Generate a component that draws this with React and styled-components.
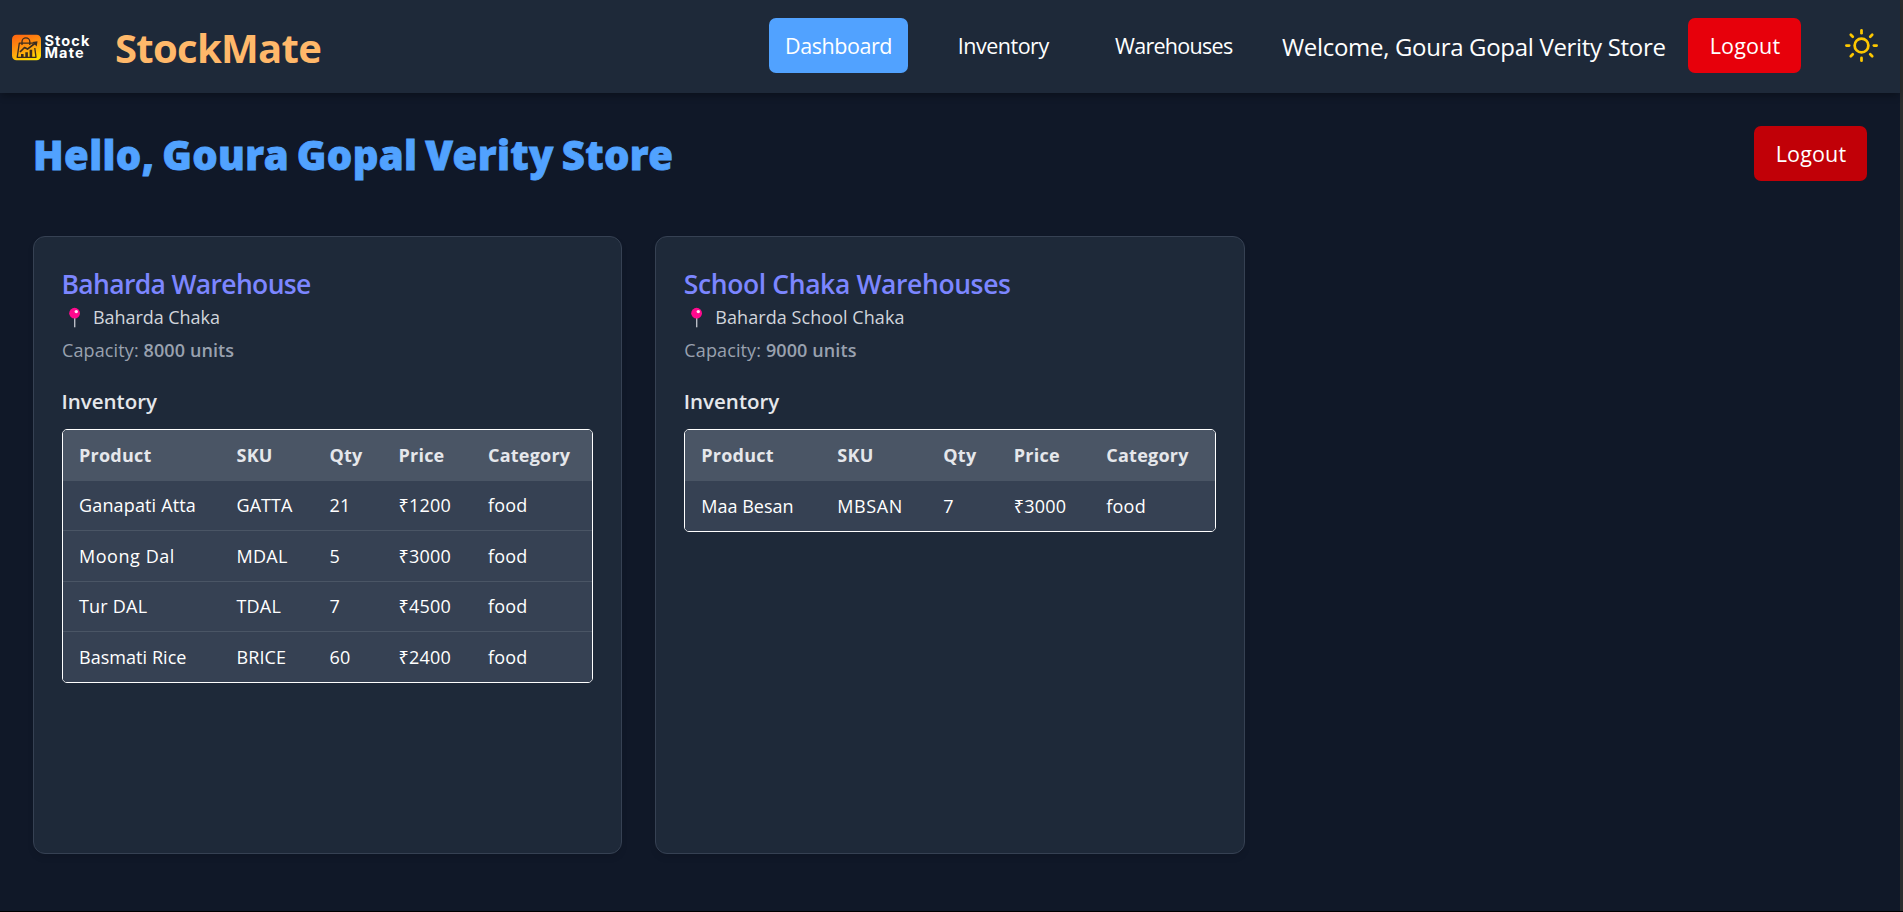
import React from 'react';
import styled, { createGlobalStyle } from 'styled-components';
import { FiSun } from 'react-icons/fi';

const Global = createGlobalStyle`
  *, *::before, *::after { box-sizing: border-box; }
  body { margin: 0; background: #000; overflow: hidden; }
  h1, h2, h3, p { margin: 0; }
`;

const Screen = styled.div`
  height: 912px;
  border-bottom: 1px solid #000;
  background: #2c2c2c;
  padding-right: 3px;
  font-family: 'Open Sans', 'Noto Sans', sans-serif;
  color: #fff;
`;

const Page = styled.div`
  height: 100%;
  background: #101828;
`;

const Header = styled.header`
  display: flex;
  align-items: center;
  justify-content: space-between;
  height: 93px;
  padding: 18px 22px 20px 11px;
  background: #1e2939;
  box-shadow: 0 4px 7px -1px rgba(0, 0, 0, 0.3);
`;

const Brand = styled.div`
  display: flex;
  align-items: center;
`;

const BrandName = styled.span`
  margin-left: 20px;
  padding-top: 4px;
  font-size: 40px;
  line-height: 46px;
  font-weight: 700;
  letter-spacing: -0.7px;
  color: #ffb86a;
`;

const Logo = styled.div`
  display: flex;
  align-items: center;
  width: 84px;
  height: 36px;
`;

const LogoIcon = styled.svg`
  flex: none;
  width: 33.5px;
  height: 36px;
`;

const LogoText = styled.div`
  padding-top: 3px;
  font-family: Inter, sans-serif;
  font-size: 14.5px;
  line-height: 12.4px;
  font-weight: 700;
  letter-spacing: 1.1px;
  white-space: pre-line;
`;

const Nav = styled.nav`
  display: flex;
  align-items: center;
  gap: 33px;
`;

const NavLink = styled.a`
  width: ${(p) => p.$width}px;
  height: 55px;
  line-height: 55px;
  border-radius: 7px;
  text-align: center;
  white-space: nowrap;
  font-size: 21.5px;
  letter-spacing: ${(p) => p.$track}px;
  background: ${(p) => (p.$active ? '#51a2ff' : 'transparent')};
`;

const Account = styled.div`
  display: flex;
  align-items: center;
`;

const Welcome = styled.span`
  width: 384px;
  margin-right: 22px;
  padding-top: 2px;
  font-size: 24px;
  line-height: 36px;
  letter-spacing: -0.31px;
  white-space: nowrap;
`;

const LogoutButton = styled.button`
  width: 113px;
  height: 55px;
  padding: 0 0 0 1px;
  border: 0;
  border-radius: 7px;
  font-family: inherit;
  font-size: 21.5px;
  line-height: 55px;
  letter-spacing: 0.15px;
  color: #fff;
  background: ${(p) => (p.$dark ? '#c10007' : '#e7000b')};
`;

const ThemeIcon = styled(FiSun)`
  display: block;
  width: 33px;
  height: 33px;
  margin-left: 44px;
  color: #fdc700;
`;

const Main = styled.main`
  padding: 33px;
`;

const TitleRow = styled.div`
  display: flex;
  align-items: center;
  justify-content: space-between;
  height: 55px;
  margin-bottom: 55px;
`;

const Greeting = styled.h1`
  padding-top: 3px;
  font-family: 'Noto Sans', sans-serif;
  font-size: 40px;
  line-height: 46px;
  font-weight: 900;
  letter-spacing: 0.4px;
  word-spacing: -3px;
  -webkit-text-stroke: 0.8px #51a2ff;
  color: #51a2ff;
`;

const Cards = styled.section`
  display: grid;
  grid-template-columns: repeat(3, 1fr);
  gap: 33px;
`;

const Card = styled.article`
  height: 617.5px;
  padding: 28px;
  border: 1px solid #364153;
  border-radius: 12px;
  background: #1e2939;
  box-shadow: 0 4px 7px -1px rgba(0, 0, 0, 0.1);
`;

const CardTitle = styled.h2`
  margin-left: -0.5px;
  padding-top: 1px;
  font-size: 26.5px;
  line-height: 36px;
  font-weight: 600;
  letter-spacing: ${(p) => p.$track}px;
  color: #7c86ff;
  white-space: nowrap;
`;

const Location = styled.p`
  display: flex;
  font-size: 18px;
  line-height: 31px;
  height: 31px;
  letter-spacing: ${(p) => p.$track}px;
  color: #d1d5dc;
`;

const PinIcon = styled.svg`
  width: 31px;
  height: 32px;
  margin: -1px 0 0;
  flex: none;
`;

const Capacity = styled.p`
  font-size: 18px;
  line-height: 34px;
  letter-spacing: 0.12px;
  color: #99a1af;

  strong {
    font-weight: 600;
    letter-spacing: 0.1px;
  }
`;

const SectionTitle = styled.h3`
  margin: 18px 0 11px -0.5px;
  font-size: 20.5px;
  line-height: 33px;
  font-weight: 600;
  letter-spacing: 0;
  color: #e5e7eb;
`;

const TableFrame = styled.div`
  border: 1px solid #fff;
  border-radius: 5px;
  overflow: hidden;
`;

const Table = styled.table`
  width: 100%;
  table-layout: fixed;
  border-collapse: separate;
  border-spacing: 0;
  font-size: 18px;
  text-align: left;
`;

const HeadCell = styled.th`
  width: ${(p) => (p.$width ? `${p.$width}px` : 'auto')};
  height: 51px;
  padding: 0 0 2px 16px;
  font-weight: 700;
  letter-spacing: 0.22px;
  color: #e5e7eb;
  background: #4a5565;
`;

const Row = styled.tr`
  height: 50px;
  background: #364153;

  &:nth-child(2) { height: 51px; }
  &:not(:last-child) td { border-bottom: 1px solid #4a5565; }
`;

const Cell = styled.td`
  padding: 0 0 1px 16px;
  line-height: 26px;
  white-space: nowrap;
  letter-spacing: ${(p) => p.$track ?? 0.15}px;
`;

const LogoMark = () => (
  <Logo>
    <LogoIcon viewBox="0 0 33.5 36" aria-hidden="true">
      <defs>
        <linearGradient id="bag" x1="0.3" y1="0" x2="0.7" y2="1">
          <stop offset="0" stopColor="#ff6a10" />
          <stop offset="0.5" stopColor="#ff9a10" />
          <stop offset="1" stopColor="#ffe000" />
        </linearGradient>
      </defs>
      <rect x="1" y="6.8" width="29" height="25.5" rx="4.5" fill="url(#bag)" />
      <g fill="none" stroke="#3a2c20" strokeWidth="1.3" strokeLinejoin="round">
        <path d="M22 15.2H8.3L6.2 29.3H25L23.8 20" />
        <path d="M11 17V13.8a3.9 3.9 0 0 1 7.8 0V17" />
        <path d="M9 24l4.5-4.5 3 1.6 7.2-5.6" strokeWidth="1.7" />
      </g>
      <path d="M21.3 14l5.2-.7-.8 5.2z" fill="#3a2c20" />
      <path d="M10 26h2.6v3.3H10zM14.3 24.2h2.6v5.1h-2.6zM18.6 21.8h2.6v7.5h-2.6z" fill="#3a2c20" />
    </LogoIcon>
    <LogoText>{'Stock\nMate'}</LogoText>
  </Logo>
);

const Pin = () => (
  <PinIcon viewBox="0 0 31 32" aria-hidden="true">
    <rect x="12" y="16" width="1.4" height="10.3" fill="#b9bdc6" />
    <circle cx="12.6" cy="12.2" r="5.4" fill="#ff0a8e" />
    <circle cx="14.3" cy="10.6" r="1.7" fill="#ffe6f4" />
  </PinIcon>
);

const headings = ['Product', 'SKU', 'Qty', 'Price', 'Category'];

const warehouses = [
  {
    name: 'Baharda Warehouse',
    track: -0.66,
    location: 'Baharda Chaka',
    locationTrack: -0.05,
    capacity: 8000,
    columns: [157.5, 93, 69, 89.5],
    items: [
      ['Ganapati Atta', 'GATTA', 21, 1200, 'food', 0.15, 0.05],
      ['Moong Dal', 'MDAL', 5, 3000, 'food', 0.55, 0.3],
      ['Tur DAL', 'TDAL', 7, 4500, 'food', 0.2, 0.2],
      ['Basmati Rice', 'BRICE', 60, 2400, 'food', 0.05, 0.1],
    ],
  },
  {
    name: 'School Chaka Warehouses',
    track: -0.39,
    location: 'Baharda School Chaka',
    locationTrack: 0.06,
    capacity: 9000,
    columns: [136, 106, 70.5, 92.5],
    items: [['Maa Besan', 'MBSAN', 7, 3000, 'food', 0, 0.6]],
  },
];

const WarehouseCard = ({ data }) => (
  <Card>
    <CardTitle $track={data.track}>{data.name}</CardTitle>
    <Location $track={data.locationTrack}>
      <Pin />
      {data.location}
    </Location>
    <Capacity>
      Capacity: <strong>{data.capacity} units</strong>
    </Capacity>
    <SectionTitle>Inventory</SectionTitle>
    <TableFrame>
      <Table>
        <thead>
          <tr>
            {headings.map((h, i) => (
              <HeadCell key={h} $width={data.columns[i]}>{h}</HeadCell>
            ))}
          </tr>
        </thead>
        <tbody>
          {data.items.map(([product, sku, qty, price, category, nameTrack, skuTrack]) => (
            <Row key={sku}>
              <Cell $track={nameTrack}>{product}</Cell>
              <Cell $track={skuTrack}>{sku}</Cell>
              <Cell>{qty}</Cell>
              <Cell $track={0.2}>{`₹${price}`}</Cell>
              <Cell $track={0.2}>{category}</Cell>
            </Row>
          ))}
        </tbody>
      </Table>
    </TableFrame>
  </Card>
);

export default function App() {
  return (
    <Screen>
      <Global />
      <Page>
        <Header>
          <Brand>
            <LogoMark />
            <BrandName>StockMate</BrandName>
          </Brand>
          <Nav>
            <NavLink $width={139} $track={-0.45} $active>Dashboard</NavLink>
            <NavLink $width={124.5} $track={-0.5}>Inventory</NavLink>
            <NavLink $width={150.5} $track={-0.72}>Warehouses</NavLink>
            <Account>
              <Welcome>Welcome, Goura Gopal Verity Store</Welcome>
              <LogoutButton>Logout</LogoutButton>
              <ThemeIcon />
            </Account>
          </Nav>
        </Header>
        <Main>
          <TitleRow>
            <Greeting>Hello, Goura Gopal Verity Store</Greeting>
            <LogoutButton $dark>Logout</LogoutButton>
          </TitleRow>
          <Cards>
            {warehouses.map((w) => (
              <WarehouseCard key={w.name} data={w} />
            ))}
          </Cards>
        </Main>
      </Page>
    </Screen>
  );
}
